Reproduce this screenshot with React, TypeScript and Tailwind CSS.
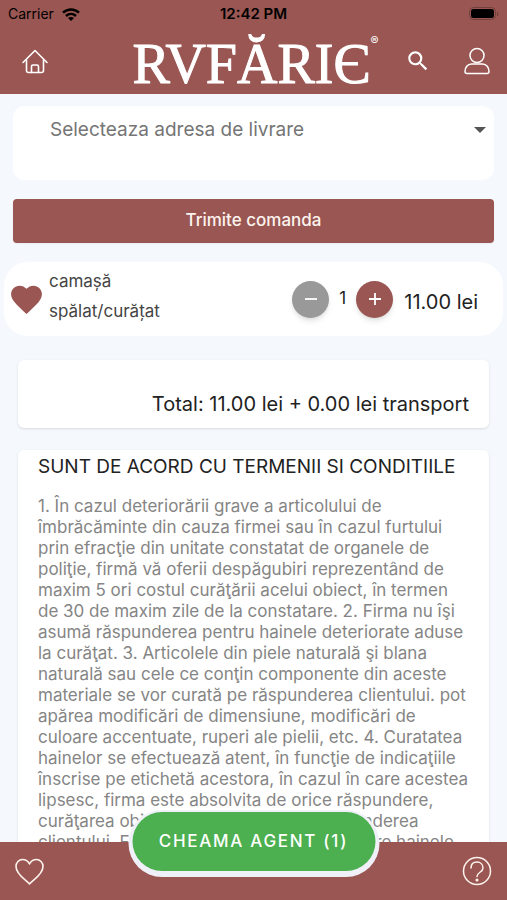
import { useState } from "react";

const TERMS =
  "1. În cazul deteriorării grave a articolului de îmbrăcăminte din cauza firmei sau în cazul furtului prin efracţie din unitate constatat de organele de poliţie, firmă vă oferii despăgubiri reprezentând de maxim 5 ori costul curăţării acelui obiect, în termen de 30 de maxim zile de la constatare. 2. Firma nu îşi asumă răspunderea pentru hainele deteriorate aduse la curăţat. 3. Articolele din piele naturală şi blana naturală sau cele ce conţin componente din aceste materiale se vor curată pe răspunderea clientului. pot apărea modificări de dimensiune, modificări de culoare accentuate, ruperi ale pielii, etc. 4. Curatatea hainelor se efectuează atent, în funcţie de indicaţiile înscrise pe etichetă acestora, în cazul în care acestea lipsesc, firma este absolvita de orice răspundere, curăţarea obiectelor se va face pe răspunderea clientului. Firma nu va răspunde pentru care hainele";

const PRICE = 11;

function StatusBar() {
  return (
    <div className="grid h-7 grid-cols-3 items-center px-2 text-black">
      <div className="flex items-center gap-2 text-sm">
        <span>Carrier</span>
        <svg width="18" height="13" viewBox="0 0 18 13" fill="none" stroke="currentColor" strokeWidth="2.4">
          <path d="M1 4.7C5.6.4 12.4.4 17 4.7" />
          <path d="M4 8C6.9 5.3 11.1 5.3 14 8" />
          <path d="M9 13 6 10.1c1.7-1.5 4.3-1.5 6 0z" fill="currentColor" stroke="none" />
        </svg>
      </div>
      <span className="text-center text-[15px] font-semibold">12:42 PM</span>
      <svg className="justify-self-end" width="30" height="14" viewBox="0 0 30 14">
        <rect x="0.5" y="0.5" width="26" height="12" rx="4" fill="none" stroke="#74403d" />
        <rect x="2" y="2" width="23" height="9" rx="2.5" fill="#000" />
        <path d="M28 4.5c2 .8 2 4.2 0 5z" fill="#74403d" />
      </svg>
    </div>
  );
}

function Header() {
  return (
    <header className="shrink-0 bg-[#995652] text-white">
      <StatusBar />
      <div className="flex h-[66px] items-center justify-between pr-4 pl-5">
        <button aria-label="Acasă" className="w-[30px]">
          <svg width="30" height="28" viewBox="0 0 30 28" fill="none" stroke="currentColor" strokeWidth="1.6" strokeLinecap="round" strokeLinejoin="round">
            <path d="M3 15.5 15 3.5l12 12" />
            <path d="M6.5 13v10.5q0 2 2 2h13q2 0 2-2V13" />
            <path d="M11.5 25.5v-6q0-1.500 1.500-1.500h4q1.500 0 1.500 1.500v6" />
          </svg>
        </button>
        <h1 className="flex pt-1.5 pl-14 font-['Liberation_Serif',serif] text-[56px] leading-[66px] [-webkit-text-stroke:1px_white]">
          RVFĂRIЄ
          <span className="pt-0.5 font-[Inter,sans-serif] text-xs leading-4 [-webkit-text-stroke:0]">®</span>
        </h1>
        <div className="flex items-center gap-8">
          <button aria-label="Caută">
            <svg width="26" height="26" viewBox="0 0 24 24" fill="currentColor">
              <path d="M15.5 14h-.79l-.28-.27A6.470 6.470 0 0 0 16 9.500 6.500 6.500 0 1 0 9.500 16c1.610 0 3.090-.59 4.230-1.570l.27.28v.79l5 4.990L20.490 19l-4.990-5zm-6 0C7.010 14 5 11.990 5 9.500S7.010 5 9.500 5 14 7.010 14 9.500 11.990 14 9.500 14z" />
            </svg>
          </button>
          <button aria-label="Contul meu">
            <svg width="28" height="28" viewBox="0 0 28 28" fill="none" stroke="currentColor" strokeWidth="1.500">
              <circle cx="14" cy="8.500" r="7" />
              <path d="M8.500 17h11c4 0 6.500 3.500 6.500 7.500q0 2-2 2H4q-2 0-2-2C2 20.500 4.500 17 8.500 17z" />
            </svg>
          </button>
        </div>
      </div>
    </header>
  );
}

export default function App() {
  const [count, setCount] = useState(1);
  const total = (count * PRICE).toFixed(2);

  return (
    <div className="flex h-screen flex-col bg-[#f5f9fe] font-[Inter,sans-serif] text-[#222]">
      <Header />

      <main className="min-h-0 flex-1 overflow-hidden">
        <div className="mx-[13px] mt-3 h-[74px] rounded-xl bg-white">
          <div className="relative">
            <select
              aria-label="Adresa de livrare"
              defaultValue=""
              className="h-12 w-full appearance-none bg-transparent pl-[37px] text-[19px] text-[#757575] outline-none"
            >
              <option value="">Selecteaza adresa de livrare</option>
            </select>
            <svg className="pointer-events-none absolute top-[21px] right-2" width="12" height="6" viewBox="0 0 12 6">
              <path d="M0 0h12L6 6z" fill="#555" />
            </svg>
          </div>
        </div>

        <div className="mx-[13px] mt-[19px]">
          <button className="h-11 w-full rounded-sm bg-[#995652] text-[17px] font-medium text-[#fdf3ee] shadow-xs">
            Trimite comanda
          </button>
        </div>

        {/* Cart item */}
        <section className="mx-1 mt-[19px] flex h-[74px] items-center rounded-3xl bg-white pr-[25px] pl-1">
          <svg width="37" height="37" viewBox="0 0 24 24" fill="#995652">
            <path d="M12 21.350l-1.450-1.320C5.400 15.360 2 12.280 2 8.500 2 5.420 4.420 3 7.500 3c1.740 0 3.410.81 4.500 2.090C13.090 3.810 14.760 3 16.500 3 19.580 3 22 5.420 22 8.500c0 3.780-3.400 6.860-8.550 11.540L12 21.350z" />
          </svg>
          <div className="ml-1 flex-1 pb-1.5 text-[17px] leading-[30px] text-[#444]">
            <p>camașă</p>
            <p>spălat/curățat</p>
          </div>
          <button
            aria-label="Scade"
            onClick={() => setCount(Math.max(0, count - 1))}
            className="flex size-[37px] items-center justify-center rounded-full bg-[#999] shadow-md"
          >
            <svg width="12" height="12" viewBox="0 0 12 12" stroke="#fff" strokeWidth="1.800">
              <path d="M0 6h12" />
            </svg>
          </button>
          <span className="w-[27px] text-center text-[17px]">{count}</span>
          <button
            aria-label="Adaugă"
            onClick={() => setCount(count + 1)}
            className="flex size-[37px] items-center justify-center rounded-full bg-[#995652] shadow-md"
          >
            <svg width="12" height="12" viewBox="0 0 12 12" stroke="#fff" strokeWidth="1.800">
              <path d="M0 6h12M6 0v12" />
            </svg>
          </button>
          <span className="ml-[11px] pt-1.5 text-xl">{total} lei</span>
        </section>

        <section className="mx-[18px] mt-6 flex h-[68px] items-end justify-end rounded-md bg-white px-5 pb-2.5 text-xl shadow-sm">
          Total: {total} lei + 0.00 lei transport
        </section>

        <section className="mx-[18px] mt-[22px] rounded-md bg-white px-5 pt-1 shadow-sm">
          <h2 className="text-[19px] leading-[26px]">SUNT DE ACORD CU TERMENII SI CONDITIILE</h2>
          <p className="mt-4 text-[17px] leading-[21px] text-[#858585]">{TERMS}</p>
        </section>
      </main>

      <footer className="relative flex h-[58px] shrink-0 items-center justify-between bg-[#995652] px-[15px] text-[#fff3ee]">
        <button aria-label="Favorite">
          <svg width="29" height="27" viewBox="0 0 29 27" fill="none" stroke="currentColor" strokeWidth="1.600" strokeLinejoin="round">
            <path d="M14.500 26C11 22 1 16.500 1 8.500 1 4.500 4 1.500 7.500 1.500c3 0 5.500 1.500 7 4.500 1.500-3 4-4.500 7-4.500C25 1.500 28 4.500 28 8.500 28 16.500 18 22 14.500 26z" />
          </svg>
        </button>
        <button aria-label="Ajutor">
          <svg width="30" height="30" viewBox="0 0 30 30" fill="none" stroke="currentColor" strokeWidth="1.500">
            <circle cx="15" cy="15" r="13.500" />
            <path d="M9 12c0-4 2.500-6 6-6s6 2.500 6 6c0 4.500-6 4-6 8.500" strokeLinecap="round" />
            <circle cx="15" cy="24" r="0.800" />
          </svg>
        </button>
        <button className="absolute -top-[30px] left-1/2 h-[59px] w-[243px] -translate-x-1/2 rounded-full bg-[#4caf50] text-[17px] font-medium tracking-widest text-white shadow-[0_2px_0_4px_#eff0f8]">
          CHEAMA AGENT ({count})
        </button>
      </footer>
    </div>
  );
}
